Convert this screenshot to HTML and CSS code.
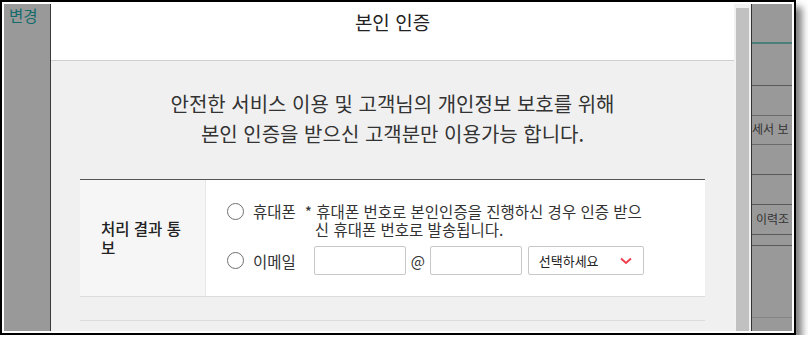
FILE: index.html
```html
<!DOCTYPE html>
<html lang="ko">
<head>
<meta charset="utf-8">
<title>본인 인증</title>
<link rel="stylesheet" href="styles.css">
</head>
<body>
<div class="frame">
  <div class="page-left">
    <span class="left-link">변경</span>
  </div>
  <div class="modal">
    <div class="modal-head">본인 인증</div>
    <div class="modal-body">
      <p class="intro">안전한 서비스 이용 및 고객님의 개인정보 보호를 위해<br>본인 인증을 받으신 고객분만 이용가능 합니다.</p>
      <div class="form-table">
        <div class="th">처리 결과 통보</div>
        <div class="td">
          <div class="opt-row">
            <span class="radio"></span>
            <span class="opt-label">휴대폰</span>
            <p class="note">* 휴대폰 번호로 본인인증을 진행하신 경우 인증 받으신 휴대폰 번호로 발송됩니다.</p>
          </div>
          <div class="opt-row email-row">
            <span class="radio"></span>
            <span class="opt-label email-label">이메일</span>
            <span class="input"></span>
            <span class="at">@</span>
            <span class="input"></span>
            <span class="select">선택하세요
              <svg class="chev" width="12" height="8" viewBox="0 0 12 8"><polyline points="1,1.5 6,6 11,1.5" fill="none" stroke="#f0404f" stroke-width="2"/></svg>
            </span>
          </div>
        </div>
      </div>
      <div class="next-row"></div>
    </div>
  </div>
  <div class="scrollbar"><div class="thumb"></div></div>
  <div class="page-right">
    <div class="r r1"></div>
    <div class="r r2"></div>
    <div class="r r3"></div>
    <div class="r r4"><span class="r-text t1">세서 보</span></div>
    <div class="r r5"></div>
    <div class="r r6"></div>
    <div class="r r7"><span class="r-text t2">이력조</span></div>
    <div class="r r8"></div>
    <div class="r r9"></div>
  </div>
</div>
</body>
</html>
```
FILE: styles.css
```css
html, body {
  margin: 0;
  padding: 0;
  background: #fff;
}
body {
  font-family: "Noto Sans CJK KR", "Noto Sans", sans-serif;
}
.frame {
  width: 788px;
  height: 327px;
  border: 2px solid #000;
  padding: 2px;
  background: #fff;
  box-shadow: 6px 7px 7px rgba(0, 0, 0, 0.5);
  display: flex;
  overflow: hidden;
}
.page-left {
  width: 46px;
  flex: none;
  background: #999;
  border-right: 1px solid #3a3a3a;
  overflow: hidden;
}
.left-link {
  display: block;
  margin: 0 0 0 5px;
  font-size: 15.5px;
  line-height: 22px;
  color: #136b6b;
  white-space: nowrap;
}
.modal {
  width: 683px;
  flex: none;
  display: flex;
  flex-direction: column;
  background: #f0f0f0;
}
.modal-head {
  height: 57px;
  flex: none;
  background: #fff;
  border-bottom: 1px solid #cfcfcf;
  text-align: center;
  font-size: 19px;
  line-height: 26px;
  padding-top: 5px;
  box-sizing: border-box;
  color: #222;
}
.modal-body {
  flex: 1;
  padding: 28px 29px 0;
}
.intro {
  margin: 0;
  text-align: center;
  font-size: 20px;
  line-height: 30px;
  color: #333;
}
.form-table {
  margin-top: 30px;
  display: grid;
  grid-template-columns: 126px 1fr;
  border-top: 1px solid #555;
  border-bottom: 1px solid #dcdcdc;
}
.th {
  background: #f6f6f6;
  border-right: 1px solid #e6e6e6;
  padding: 0 18px 0 21px;
  display: flex;
  align-items: center;
  font-size: 15.5px;
  line-height: 19px;
  font-weight: 500;
  color: #222;
  word-break: break-all;
}
.td {
  background: #fff;
  padding: 22px 20px 21px 21px;
}
.opt-row {
  display: flex;
  align-items: flex-start;
  font-size: 15.5px;
  line-height: 18px;
  color: #333;
}
.radio {
  width: 15px;
  height: 15px;
  flex: none;
  border: 1px solid #6f6f6f;
  border-radius: 50%;
  background: #fff;
  margin: 1px 9px 0 0;
}
.opt-label {
  flex: none;
}
.note {
  margin: 0 0 0 9px;
  width: 338px;
  padding-left: 10px;
  text-indent: -10px;
}
.email-row {
  margin-top: 8px;
  align-items: center;
}
.email-row .radio {
  margin-top: 0;
}
.email-label {
  margin-right: 18px;
}
.input {
  width: 90px;
  height: 27px;
  flex: none;
  border: 1px solid #c8c8c8;
  border-radius: 2px;
  background: #fff;
}
.at {
  width: 24px;
  text-align: center;
  font-size: 15px;
  color: #333;
}
.select {
  margin-left: 6px;
  width: 114px;
  height: 27px;
  flex: none;
  border: 1px solid #c8c8c8;
  border-radius: 2px;
  background: #fff;
  display: flex;
  align-items: center;
  justify-content: space-between;
  font-size: 13px;
  color: #222;
  text-indent: 10px;
}
.chev {
  margin-right: 11px;
  flex: none;
}
.next-row {
  height: 23px;
  border-bottom: 1px solid #dcdcdc;
}
.scrollbar {
  width: 17px;
  flex: none;
  background: #f1f1f1;
  padding: 4px 2px 0;
  box-sizing: border-box;
}
.thumb {
  height: 100%;
  background: #c1c1c1;
}
.page-right {
  flex: 1;
  background: #999;
  border-left: 1px solid #333;
  overflow: hidden;
  display: flex;
  flex-direction: column;
}
.r {
  flex: none;
  border-bottom: 1px solid #5a5a5a;
  box-sizing: border-box;
  display: flex;
  align-items: center;
  overflow: hidden;
}
.r1 { height: 40px; border-bottom: 2px solid #4a7f79; }
.r2 { height: 42px; }
.r3 { height: 30px; border-bottom-color: #6a6a6a; }
.r4 { height: 29px; border-bottom-color: #6a6a6a; padding-bottom: 4px; }
.r5 { height: 30px; }
.r6 { height: 30px; }
.r7 { height: 30px; padding-bottom: 3px; }
.r8 { height: 11px; }
.r9 { height: 72px; border-bottom-color: #858585; }
.r-text {
  font-size: 12px;
  color: #333;
  white-space: nowrap;
}
.t1 { margin-left: 0; }
.t2 { margin-left: 4px; }
```
